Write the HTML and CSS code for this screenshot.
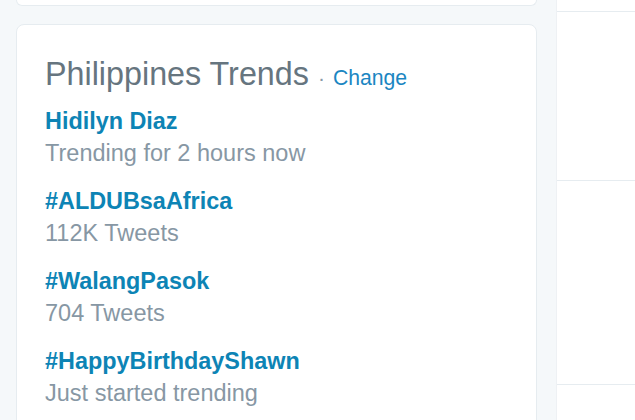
FILE: index.html
```html
<!DOCTYPE html>
<html>
<head>
<meta charset="utf-8">
<link rel="stylesheet" href="styles.css">
</head>
<body>
<div class="page">
  <div class="main">
    <div class="card card-top"></div>
    <div class="card trends">
      <div class="trends-head">
        <span class="title">Philippines Trends</span>
        <span class="dot">·</span>
        <a class="change" href="#">Change</a>
      </div>
      <ul class="trend-list">
        <li class="trend">
          <a class="trend-name" href="#">Hidilyn Diaz</a>
          <div class="trend-meta">Trending for 2 hours now</div>
        </li>
        <li class="trend">
          <a class="trend-name" href="#">#ALDUBsaAfrica</a>
          <div class="trend-meta">112K Tweets</div>
        </li>
        <li class="trend">
          <a class="trend-name" href="#">#WalangPasok</a>
          <div class="trend-meta">704 Tweets</div>
        </li>
        <li class="trend">
          <a class="trend-name" href="#">#HappyBirthdayShawn</a>
          <div class="trend-meta">Just started trending</div>
        </li>
      </ul>
    </div>
  </div>
  <div class="side">
    <div class="side-row r1"></div>
    <div class="side-row r2"></div>
    <div class="side-row r3"></div>
    <div class="side-row r4"></div>
  </div>
</div>
</body>
</html>
```

FILE: styles.css
```css
html, body {
  margin: 0;
  padding: 0;
}
body {
  background: #f5f8fa;
  font-family: "Liberation Sans", Arial, sans-serif;
  height: 420px;
  overflow: hidden;
}
.page {
  display: grid;
  grid-template-columns: 521px 79px;
  column-gap: 19px;
  padding-left: 16px;
  height: 420px;
  overflow: hidden;
}
.main {
  display: flex;
  flex-direction: column;
  gap: 18px;
  overflow: hidden;
}
.card {
  background: #fff;
  border: 1px solid #e6ecf0;
  border-radius: 8px;
}
.card-top {
  height: 5px;
  flex: none;
  border-top: none;
  border-radius: 0 0 8px 8px;
}
.trends {
  box-sizing: border-box;
  padding: 31px 27px 0 28px;
  height: 420px;
  flex: none;
}
.trends-head {
  display: flex;
  align-items: baseline;
  height: 36px;
  line-height: 36px;
  margin-bottom: 13px;
}
.title {
  font-size: 32.3px;
  color: #66757f;
}
.dot {
  font-size: 21px;
  color: #8899a6;
  margin: 0 8px 0 9px;
}
.change {
  font-size: 21.2px;
  color: #1b86c2;
  text-decoration: none;
}
.trend-list {
  list-style: none;
  margin: 0;
  padding: 0;
  display: flex;
  flex-direction: column;
  gap: 16px;
}
.trend {
  line-height: 32px;
}
.trend-name {
  display: block;
  font-size: 23.4px;
  font-weight: bold;
  color: #0d84b5;
  text-decoration: none;
}
.trend-meta {
  font-size: 23.5px;
  color: #8797a4;
}
.side {
  background: #fff;
  border-left: 1px solid #eef1f4;
  display: flex;
  flex-direction: column;
}
.side-row {
  border-bottom: 1px solid #e6ecf0;
}
.r1 { height: 11px; }
.r2 { height: 168px; }
.r3 { height: 203px; }
.r4 { border-bottom: none; flex: 1; }
```
